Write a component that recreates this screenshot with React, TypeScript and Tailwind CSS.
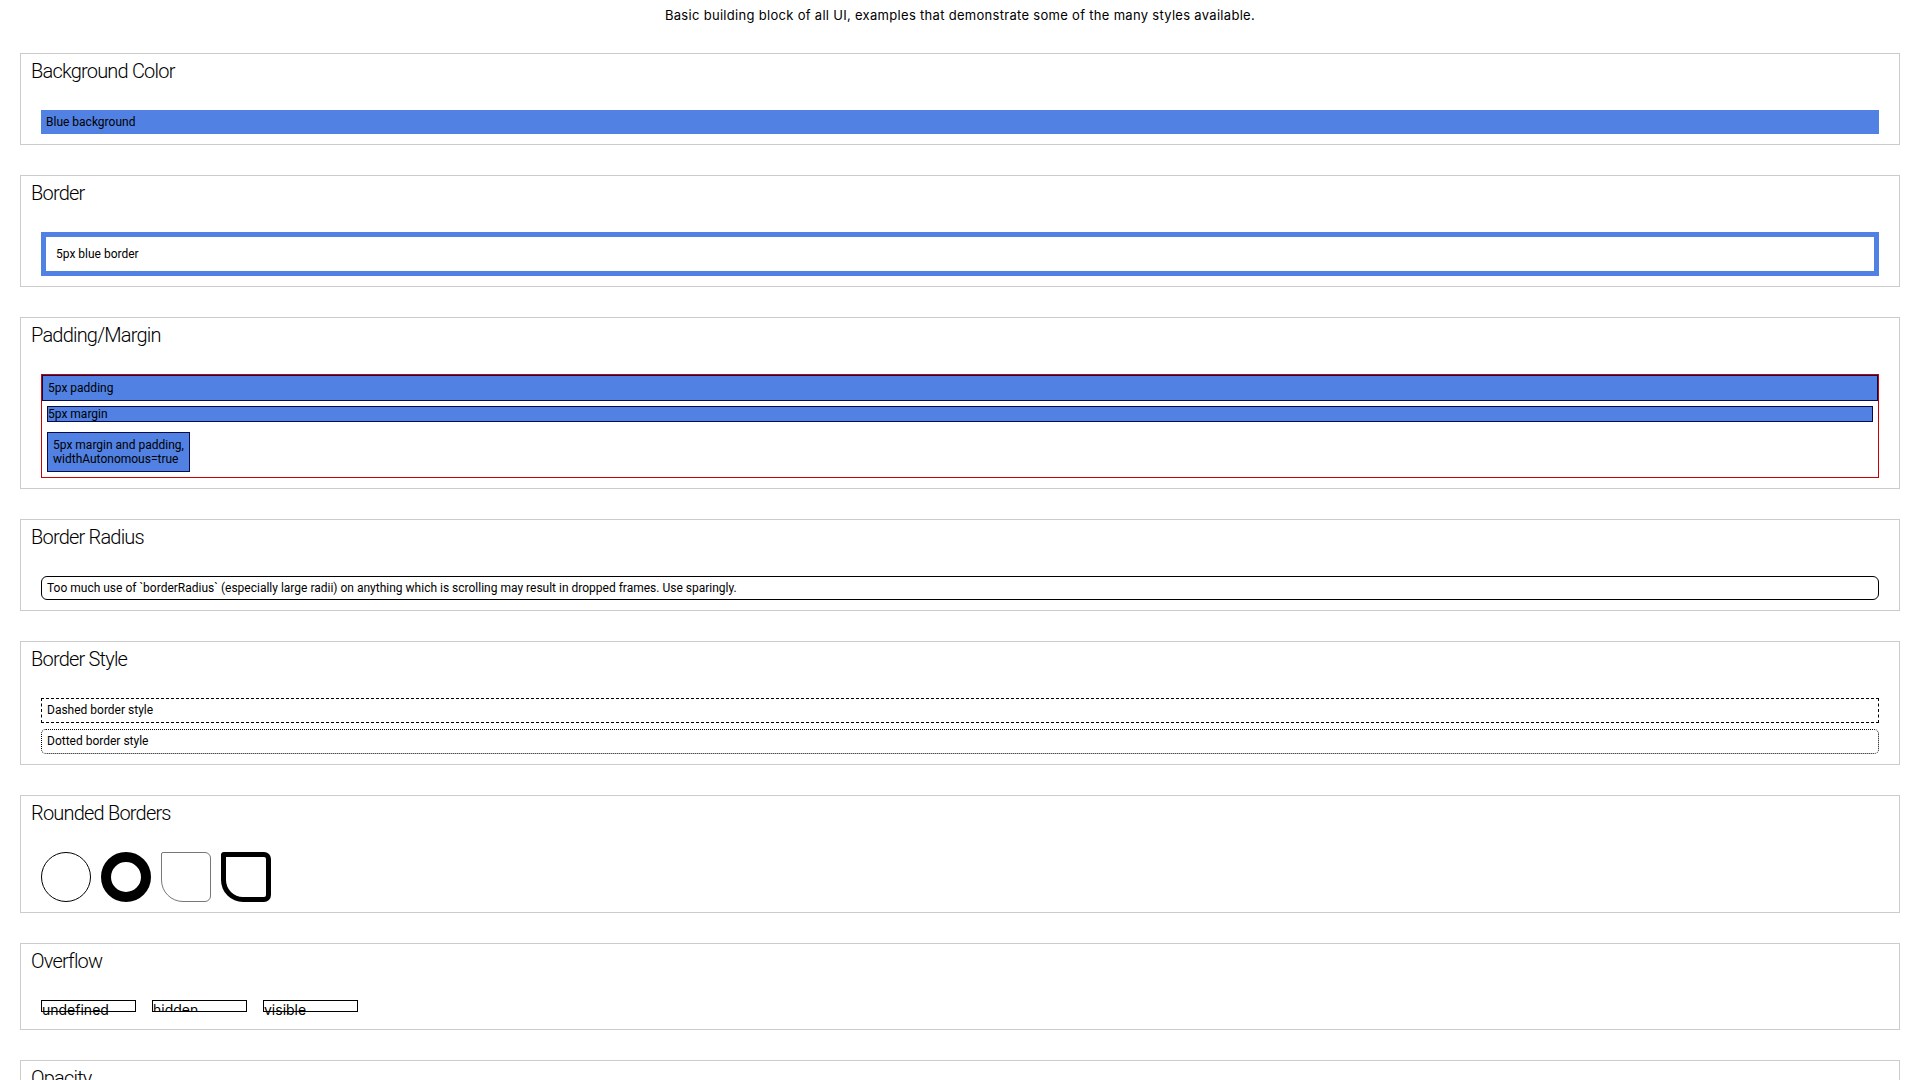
import React from 'react';

const blue = 'bg-[#5181e3]';

function Section({ title, children }: { title: string; children: React.ReactNode }) {
  return (
    <section className="border border-[#cccccc] pt-[5px] pb-[10px] px-[10px]">
      <h2 className="font-['Roboto',sans-serif] text-[20px] leading-[24px] font-light tracking-[-0.8px] text-black">
        {title}
      </h2>
      <div className="mt-[27px] px-[10px]">{children}</div>
    </section>
  );
}

const overflowItems = [
  { label: 'undefined', cls: '' },
  { label: 'hidden', cls: 'overflow-hidden' },
  { label: 'visible', cls: 'overflow-visible' },
];

export default function App() {
  return (
    <div className="min-h-screen bg-white text-black font-['Roboto',sans-serif]">
      <p className="pt-[7px] text-center font-['Inter',sans-serif] text-[13px] leading-[16px] tracking-[0.3px]">
        Basic building block of all UI, examples that demonstrate some of the many styles available.
      </p>

      <div className="mx-[20px] mt-[30px] flex flex-col gap-[30px] pb-[30px] text-[12px] leading-[14px]">
        <Section title="Background Color">
          <div className={`${blue} px-[5px] py-[5px]`}>Blue background</div>
        </Section>

        <Section title="Border">
          <div className="border-[5px] border-[#5181e3] p-[10px]">5px blue border</div>
        </Section>

        <Section title="Padding/Margin">
          <div className="flex flex-col border border-[#cc0000]">
            <div className={`${blue} border border-[#0b0b4a] p-[5px]`}>5px padding</div>
            <div className={`${blue} border border-[#0b0b4a] m-[5px]`}>5px margin</div>
            <div className={`${blue} self-start border border-[#0b0b4a] m-[5px] p-[5px]`}>
              5px margin and padding,
              <br />
              widthAutonomous=true
            </div>
          </div>
        </Section>

        <Section title="Border Radius">
          <div className="rounded-[6px] border border-black px-[5px] py-[4px] leading-[14px]">
            Too much use of `borderRadius` (especially large radii) on anything which is scrolling may result in dropped frames. Use sparingly.
          </div>
        </Section>

        <Section title="Border Style">
          <div className="flex flex-col gap-[6px]">
            <div className="border border-dashed border-black px-[5px] py-[5px] leading-[13px]">Dashed border style</div>
            <div className="rounded-[5px] border border-dotted border-black px-[5px] py-[5px] leading-[13px]">
              Dotted border style
            </div>
          </div>
        </Section>

        <Section title="Rounded Borders">
          <div className="flex gap-[10px]">
            <div className="h-[50px] w-[50px] rounded-full border border-black" />
            <div className="h-[50px] w-[50px] rounded-full border-[10px] border-black" />
            <div className="h-[50px] w-[50px] rounded-tl-[2px] rounded-tr-[6px] rounded-br-[6px] rounded-bl-[22px] border border-[#777777]" />
            <div className="h-[50px] w-[50px] rounded-tl-[3px] rounded-tr-[7px] rounded-br-[7px] rounded-bl-[22px] border-[5px] border-black" />
          </div>
        </Section>

        <Section title="Overflow">
          <div className="flex h-[19px] items-start gap-[16px]">
            {overflowItems.map((item) => (
              <div key={item.label} className={`h-[12px] w-[95px] border border-black ${item.cls}`}>
                <span className="block font-['Inter',sans-serif] text-[14px] leading-[17px]">{item.label}</span>
              </div>
            ))}
          </div>
        </Section>

        <Section title="Opacity">
          <div className="flex flex-col gap-[5px]">
            {[1, 0.8, 0.6, 0.4, 0.2].map((o) => (
              <div key={o} className={`${blue} px-[5px] py-[5px]`} style={{ opacity: o }}>
                Opacity {o}
              </div>
            ))}
          </div>
        </Section>
      </div>
    </div>
  );
}
